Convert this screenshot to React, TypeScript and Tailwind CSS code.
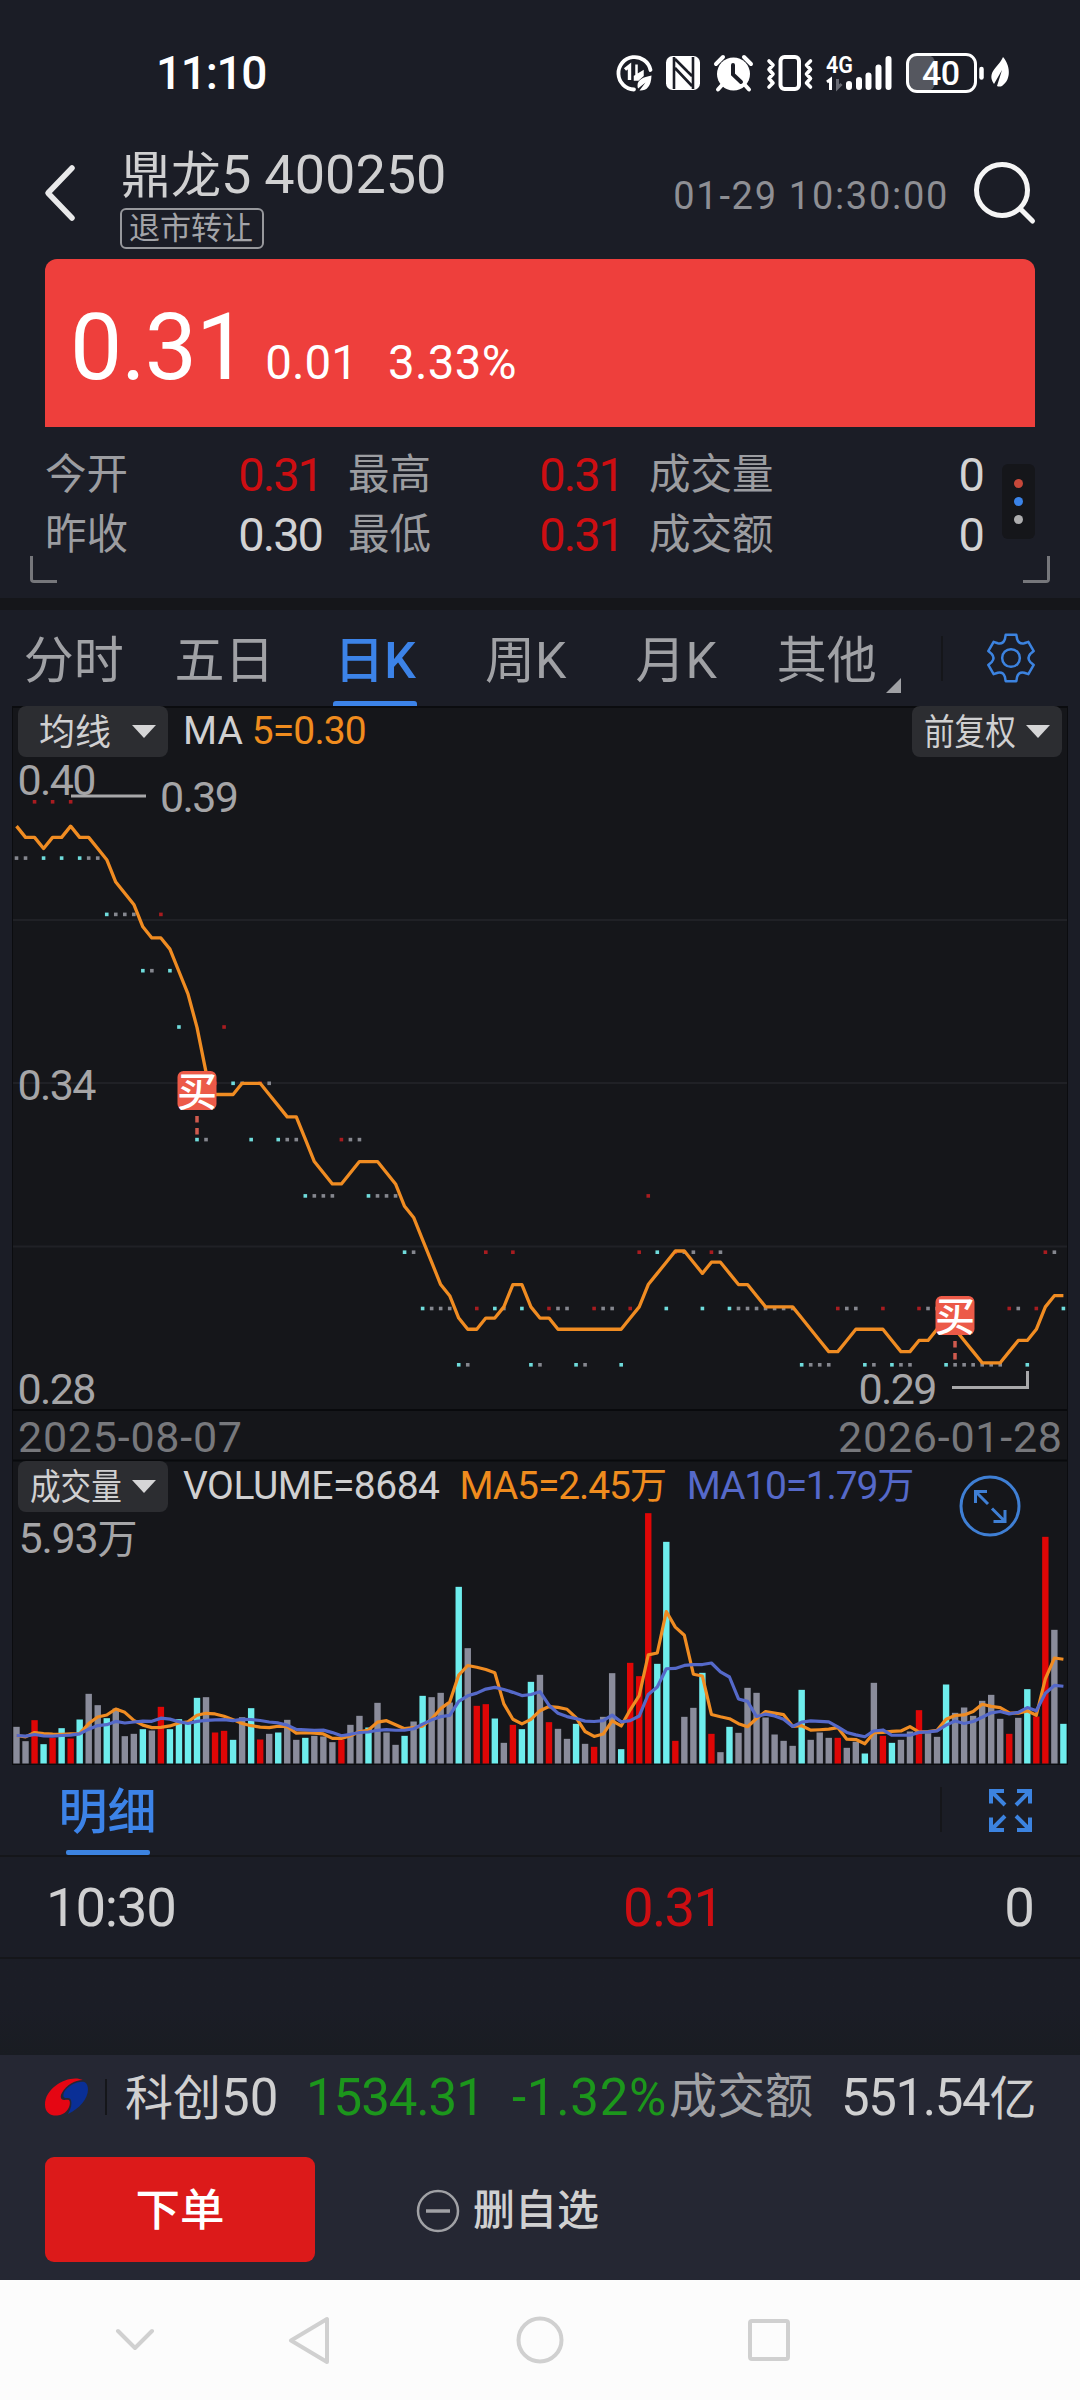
import { Fragment } from 'react'

type Tone = 'r' | 'c' | 'g'

const TONES: Record<Tone, string> = { r: '#df0606', c: '#6eeded', g: '#8a8c9b' }
const DOT_TONES: Record<Tone, string> = { r: '#a81c20', c: '#6fdcdc', g: '#85878f' }

// close price (in cents) per trading day
const CLOSES = [
  38, 38, 39, 38, 39, 38, 39, 38, 38, 38, 37, 37, 37, 37, 36, 36, 37, 36, 35, 34, 33, 33, 34, 35, 34, 34, 33, 34, 34, 33,
  33, 33, 32, 32, 32, 32, 33, 33, 33, 32, 32, 32, 32, 31, 31, 30, 30, 30, 30, 29, 29, 30, 31, 30, 30, 31, 30, 29, 29, 30,
  30, 30, 29, 29, 30, 30, 30, 29, 30, 31, 32, 31, 30, 31, 31, 31, 30, 31, 31, 30, 30, 30, 30, 30, 30, 30, 30, 29, 29, 29,
  29, 30, 30, 30, 29, 29, 30, 29, 29, 29, 30, 30, 30, 29, 29, 29, 29, 29, 29, 29, 30, 30, 29, 30, 31, 31, 30,
]
const PRIOR_CLOSES = [39, 39, 39, 38]

// bar heights, three units per pixel
const VOLUMES = [
  110, 67, 130, 58, 77, 106, 75, 132, 209, 175, 136, 165, 82, 89, 103, 99, 170, 103, 133, 121, 197, 199, 93, 98, 71, 139,
  166, 72, 89, 93, 131, 71, 77, 83, 81, 64, 71, 116, 143, 108, 182, 93, 56, 83, 126, 203, 199, 212, 183, 530, 346, 173,
  178, 135, 62, 116, 103, 245, 266, 124, 104, 74, 119, 59, 50, 140, 271, 43, 302, 262, 751, 299, 665, 68, 140, 167, 272,
  89, 34, 110, 92, 227, 212, 138, 87, 68, 53, 221, 71, 93, 77, 77, 47, 65, 30, 242, 83, 62, 71, 96, 160, 91, 80, 237, 152,
  168, 143, 188, 206, 134, 89, 137, 223, 141, 680, 401, 119,
]

const SLOT = 9.025
const slotX = (i: number) => 16.5 + i * SLOT

const tones: Tone[] = CLOSES.map((c, i) => {
  const prev = i === 0 ? 38 : CLOSES[i - 1]
  return c > prev ? 'r' : c < prev ? 'c' : 'g'
})

const average = (list: number[]) => list.reduce((a, b) => a + b, 0) / list.length

const priceY = (v: number) => 326.3 + (34 - v) * 55.9
const allCloses = [...PRIOR_CLOSES, ...CLOSES]
const priceLine = CLOSES.map((_, i) => `${slotX(i)},${priceY(average(allCloses.slice(i, i + 5)))}`).join(' ')

const VOL_BASE = 251.5
const volumeLine = (n: number, head: number[]) =>
  VOLUMES.map((_, i) => {
    const v = i < head.length ? head[i] : average(VOLUMES.slice(i - n + 1, i + 1))
    return `${slotX(i)},${VOL_BASE - v / 3}`
  }).join(' ')
const ma5 = volumeLine(5, [84, 80, 93, 90])
const ma10 = volumeLine(10, [84, 82, 87, 83, 82, 84, 85, 89, 103])

const polar = (r: number, deg: number) => {
  const a = (deg * Math.PI) / 180
  return `${(24 + r * Math.sin(a)).toFixed(2)} ${(24 - r * Math.cos(a)).toFixed(2)}`
}
const GEAR =
  [0, 60, 120, 180, 240, 300]
    .map((t, i) => `${i ? 'L' : 'M'}${polar(22.8, t - 13)} L${polar(22.8, t + 13)} L${polar(19, t + 18)} Q${polar(15, t + 30)} ${polar(19, t + 42)}`)
    .join(' ') + ' Z'

const TABS = ['分时', '五日', '日K', '周K', '月K', '其他']

const QUOTES = [
  [['今开', '0.31', true], ['最高', '0.31', true], ['成交量', '0', false]],
  [['昨收', '0.30', false], ['最低', '0.31', true], ['成交额', '0', false]],
] as const

const QUOTE_WIDTHS = ['w-[303px]', 'w-[301px]', 'w-[336px]']
const QUOTE_PADS = ['pr-[26px]', 'pr-[26px]', 'pr-[2px]']

function StatusBar() {
  return (
    <div className="flex h-[146px] items-center pl-[156px] text-white">
      <span className="w-[459px] text-[46px] leading-none font-medium tracking-[-1.3px]">11:10</span>
      <svg width="400" height="44" viewBox="0 0 400 44" fill="none" className="shrink-0">
        {/* data saver */}
        <path d="M35.500 19A16.200 16.200 0 1 0 19 38.500" stroke="white" strokeWidth="3.800" strokeLinecap="round" />
        <path d="M10 18.500l4.500-3.500v14" stroke="white" strokeWidth="3.400" />
        <path d="M21.500 13.500v12M20 25.500l7.500-4.500v3.500l-4.500 4h-3z" stroke="white" strokeWidth="2.500" fill="white" />
        <path d="M36.500 24.500C28 26 22.500 29 22.500 34.500c0 1.200.2 2.200.6 3L30.500 31.500 24.500 39.500c6.800.5 11.600-3.500 12-15z" fill="white" />
        {/* nfc */}
        <rect x="51" y="5" width="34" height="34" rx="6.500" fill="white" />
        <path d="M59 6v32M78 6v32M60 8l17 17M60 17l17 18" stroke="#1b1d26" strokeWidth="2.600" />
        <path d="M62 24v14l8 1zM74 20V5l-9 .2z" fill="white" />
        {/* alarm */}
        <circle cx="118.500" cy="23" r="16.500" fill="white" />
        <path d="M101 13l7-7M136 13l-7-7M107 34l-4 4.500M130 34l4 4.500" stroke="white" strokeWidth="4" strokeLinecap="round" />
        <path d="M118 14v9.500l8 7.500" stroke="#1b1d26" strokeWidth="4" strokeLinecap="round" />
        {/* vibrate */}
        <rect x="165.500" y="6" width="18.500" height="32" rx="4" stroke="white" strokeWidth="4" />
        <path d="M154 10l4 4-4 4.500 4 4.500-4 4.500 4 4.500-4 4M195.500 10l-4 4 4 4.500-4 4.500 4 4.500-4 4.500 4 4" stroke="white" strokeWidth="3.600" strokeLinejoin="round" strokeLinecap="round" />
        {/* signal */}
        <text x="211" y="22" fontSize="23" fontWeight="600" fill="white" textLength="27" lengthAdjust="spacingAndGlyphs">4G</text>
        <path d="M212 31l3.500-2.500V39" stroke="white" strokeWidth="3" />
        <path d="M222.500 28v9l4-4" stroke="#686a72" strokeWidth="3" />
        <path d="M234 33v3M244 29v7M253.500 24.500V36M263.500 16.500V36M273.500 8v28" stroke="white" strokeWidth="6" strokeLinecap="round" />
        {/* battery */}
        <rect x="293" y="4" width="27" height="36" rx="8" fill="#55575f" />
        <rect x="292.500" y="3.500" width="68" height="37" rx="9.500" stroke="white" strokeWidth="3" />
        <text x="307" y="33.500" fontSize="34" fontWeight="500" fill="white" textLength="38">40</text>
        <path d="M366.500 18v8.500" stroke="white" strokeWidth="4.500" strokeLinecap="round" />
        <path d="M388 6c7 8 9 22-1 29-2 1-4 .5-5 0l5-16-8 14c-8-12 5-17 9-27z" fill="white" />
      </svg>
    </div>
  )
}

function Header() {
  return (
    <div className="flex h-[113px] items-center pr-[43px] pl-[43px]">
      <svg width="34" height="60" viewBox="0 0 34 60" fill="none" className="-mt-[19px]">
        <path d="M29 5L5 30l24 25" stroke="#e9e9ea" strokeWidth="5.500" strokeLinecap="round" strokeLinejoin="round" />
      </svg>
      <div className="ml-[44px] flex h-full flex-col items-start">
        <div className="flex items-baseline text-[#d0d0d1]">
          <span className="text-[50px] leading-[58px]">鼎龙</span>
          <span className="text-[54px] leading-[58px]">5</span>
          <span className="ml-[13px] text-[54px] leading-[58px]">400250</span>
        </div>
        <div className="mt-[3px] -ml-[1px] flex h-[41px] items-center rounded-[6px] border-2 border-[#97989c] pr-[9px] pl-[7px] text-[31px] leading-none text-[#a3a4a8]">
          退市转让
        </div>
      </div>
      <span className="ml-auto -mt-[14px] text-[38px] leading-none tracking-[1.7px] text-[#8e8f94]">01-29 10:30:00</span>
      <svg width="66" height="66" viewBox="0 0 66 66" fill="none" className="-mt-[19px] ml-[22px]">
        <circle cx="31" cy="30" r="25.500" stroke="#f5f5f5" strokeWidth="5" />
        <path d="M49.500 49l12 12" stroke="#f5f5f5" strokeWidth="5" strokeLinecap="round" />
      </svg>
    </div>
  )
}

function Quote() {
  return (
    <div className="relative h-[339px] px-[45px]">
      <div className="flex h-[168px] items-baseline rounded-t-[12px] bg-[#ee3f3c] pl-[25px] text-white">
        <span className="text-[93px] leading-[177px] tracking-[-1px]">0.31</span>
        <span className="ml-[18px] text-[47.500px] leading-none">0.01</span>
        <span className="ml-[30px] text-[47.500px] leading-none tracking-[0.3px]">3.33%</span>
      </div>
      <div className="flex pt-[17px]">
        <div className="flex flex-col">
          {QUOTES.map((row, r) => (
            <div key={r} className="flex h-[60px] items-center">
              {row.map(([label, value, up], c) => (
                <div key={label} className={`flex items-center justify-between ${QUOTE_WIDTHS[c]} ${QUOTE_PADS[c]}`}>
                  <span className="pt-[2px] text-[41.500px] leading-none text-[#9c9da1]">{label}</span>
                  <span className={`text-[47px] leading-none tracking-[-2px] ${up ? 'text-[#cd0e12]' : 'text-[#d2d2d3]'}`}>{value}</span>
                </div>
              ))}
            </div>
          ))}
        </div>
        <div className="mt-[20px] ml-auto flex h-[75px] w-[33px] flex-col items-center justify-center gap-[9px] rounded-[6px] bg-[#15161a]">
          <i className="size-[9px] rounded-full bg-[#c6483a]" />
          <i className="size-[9px] rounded-full bg-[#3a83e8]" />
          <i className="size-[9px] rounded-full bg-[#adadae]" />
        </div>
      </div>
      <i className="absolute top-[297px] left-[30px] h-[27px] w-[27px] rounded-bl-[4px] border-b-[3px] border-l-[3px] border-[#76777b]" />
      <i className="absolute top-[297px] right-[30px] h-[27px] w-[27px] rounded-br-[4px] border-r-[3px] border-b-[3px] border-[#76777b]" />
    </div>
  )
}

function Tabs() {
  return (
    <div className="flex h-[96px]">
      {TABS.map(t => (
        <div key={t} className={`relative flex w-[150.600px] justify-center pt-[25px] pr-[3px] text-[50px] leading-[52px] ${t === '日K' ? 'font-medium text-[#3c83e8]' : 'text-[#a0a1a5]'}`}>
          {t}
          {t === '日K' && <i className="absolute bottom-0 left-[32px] h-[5px] w-[84px] rounded-t-[3px] bg-[#3c83e8]" />}
          {t === '其他' && (
            <svg width="15" height="15" viewBox="0 0 15 15" className="absolute right-[3px] bottom-[13px]">
              <path d="M15 0v15H0z" fill="#a0a1a5" />
            </svg>
          )}
        </div>
      ))}
      <i className="mt-[26px] ml-[37px] h-[45px] w-[2px] bg-[#15161a]" />
      <svg width="50" height="50" viewBox="0 0 48 48" fill="none" className="mt-[23px] ml-[43px]">
        <path d={GEAR} stroke="#3c83e0" strokeWidth="2.400" strokeLinejoin="round" />
        <circle cx="24" cy="24" r="8.500" stroke="#3c83e0" strokeWidth="2.400" />
      </svg>
    </div>
  )
}

function Picker({ label, narrow }: { label: string; narrow?: boolean }) {
  return (
    <div className={`flex h-[51px] w-[150px] shrink-0 items-center justify-between rounded-[8px] bg-[#2c2d31] pr-[12px] ${narrow ? 'pl-[12px]' : 'pl-[21px]'}`}>
      <span className={`pt-[2px] text-[36px] leading-none text-[#d0d0d1] ${narrow ? '-mr-[17px] origin-left scale-x-[0.85]' : ''}`}>{label}</span>
      <svg width="24" height="13" viewBox="0 0 24 13">
        <path d="M0 0h24L12 13z" fill="#d5d5d6" />
      </svg>
    </div>
  )
}

function PriceChart() {
  return (
    <svg width="1054" height="704" viewBox="13 757 1054 704" fill="none" className="block overflow-visible">
      <g transform="translate(0 757)">
        <path d="M13 163h1054M13 326h1054M13 489.500h1054" stroke="#202126" strokeWidth="2" />
        <path d="M13 653h1054M13 703.500h1054" stroke="#090a0d" strokeWidth="2" />
        {CLOSES.map((c, i) => (
          <rect key={i} x={slotX(i) - 1.8} y={326.3 + (34 - c) * 56.3 - 1.8} width="3.600" height="3.600" fill={DOT_TONES[tones[i]]} />
        ))}
        <g fontSize="43" fill="#a5a5a7">
          <text x="17.500" y="38" textLength="79">0.40</text>
          <text x="160" y="55" textLength="79">0.39</text>
          <text x="17.500" y="343" textLength="79">0.34</text>
          <text x="17.500" y="647" textLength="79">0.28</text>
          <text x="858.500" y="647" textLength="79">0.29</text>
        </g>
        <path d="M71 39h75M952 630.500h75.500V614" stroke="#a8a8aa" strokeWidth="3" />
        <polyline points={priceLine} stroke="#f08c22" strokeWidth="3.300" strokeLinejoin="round" />
        <path d="M197 359v6.500M197 371v6.500M955 584v6.500M955 596v6.500" stroke="#cf5a4e" strokeWidth="3.500" />
        {[[177.5, 314], [935.5, 539]].map(([x, y]) => (
          <Fragment key={x}>
            <rect x={x} y={y} width="39" height="39" rx="6" fill="#ec5a48" />
            <text x={x - 0.5} y={y + 34.5} fontSize="40" fontWeight="500" fill="white">买</text>
          </Fragment>
        ))}
        <g fontSize="43" fill="#77787c">
          <text x="18" y="695" textLength="224">2025-08-07</text>
          <text x="838" y="695" textLength="224">2026-01-28</text>
        </g>
      </g>
    </svg>
  )
}

function VolumeChart() {
  return (
    <svg width="1054" height="252" viewBox="13 0 1054 252" fill="none" className="block">
      {VOLUMES.map((v, i) => (
        <rect key={i} x={slotX(i) - 3.2} y={VOL_BASE - v / 3} width="6.400" height={v / 3} fill={TONES[tones[i]]} />
      ))}
      <text x="18.500" y="41" fontSize="43" fill="#a5a5a7" letterSpacing="-1.200">
        5.93<tspan fontSize="40">万</tspan>
      </text>
      <polyline points={ma5} stroke="#f08c22" strokeWidth="3.200" strokeLinejoin="round" />
      <polyline points={ma10} stroke="#5569c9" strokeWidth="3.200" strokeLinejoin="round" />
    </svg>
  )
}

function Chart() {
  return (
    <div className="mx-[12px] h-[1059px] border border-t-2 border-[#0b0c0f] bg-[#15161a]">
      <div className="-mt-[2px] flex h-[51px] items-center px-[5px]">
        <Picker label="均线" />
        <span className="ml-[15px] text-[39px] leading-none text-[#d0d0d1]">MA</span>
        <span className="ml-[9px] text-[39px] leading-none tracking-[-0.9px] text-[#f08c1e]">5=0.30</span>
        <div className="ml-auto">
          <Picker label="前复权" narrow />
        </div>
      </div>
      <PriceChart />
      <div className="relative flex h-[51px] items-center px-[5px]">
        <Picker label="成交量" narrow />
        <span className="ml-[15px] text-[39px] leading-none tracking-[-0.5px] text-[#d0d0d1]">VOLUME=8684</span>
        <span className="ml-[20px] text-[39px] leading-none tracking-[-1.1px] text-[#f08c1e]">MA5=2.45<span className="text-[37px]">万</span></span>
        <span className="ml-[21px] text-[39px] leading-none tracking-[-1.2px] text-[#5569c9]">MA10=1.79<span className="text-[37px]">万</span></span>
        <svg width="62" height="62" viewBox="0 0 62 62" fill="none" stroke="#3f7fd4" strokeWidth="3" className="absolute top-[14px] left-[946px]">
          <circle cx="31" cy="31" r="29" />
          <path d="M16.500 28V16.500H28M17 17l12 12M46 35v11.500H34.500M45.500 46L33 33.500" />
        </svg>
      </div>
      <VolumeChart />
    </div>
  )
}

function Details() {
  return (
    <div className="flex h-[290px] flex-col">
      <div className="flex h-[92px] border-b-2 border-[#15161a]">
        <div className="relative ml-[58px] flex w-[100px] justify-center pt-[22px] pr-[1px] text-[49px] leading-[52px] font-medium text-[#3c83e8]">
          明细
          <i className="absolute bottom-0 left-[8px] h-[5px] w-[84px] rounded-[2px] bg-[#3c83e0]" />
        </div>
        <i className="mt-[22px] ml-auto h-[45px] w-[2px] bg-[#15161a]" />
        <svg width="43" height="43" viewBox="0 0 43 43" fill="none" stroke="#3c83e0" strokeWidth="4" className="mt-[24px] mr-[48px] ml-[47px]">
          <path d="M2 14.500V2h13M3 3l13 13M41 14.500V2H28M40 3L27 16M2 28.500V41h13M3 40l13-13M41 28.500V41H28M40 40L27 27" />
        </svg>
      </div>
      <div className="flex h-[102px] items-center border-b-2 border-[#15161a] px-[45px] pt-[1px] text-[54.500px] leading-none text-[#d0d0d1]">
        <span className="w-[578px] pl-[1px] tracking-[-1.2px]">10:30</span>
        <span className="tracking-[-1.700px] text-[#cd0e12]">0.31</span>
        <span className="ml-auto">0</span>
      </div>
      <div className="flex-1 bg-gradient-to-b from-[#1b1d26] via-[#1b1d26] to-[#191c22]" />
    </div>
  )
}

function BottomBar() {
  return (
    <div className="h-[225px] bg-[#252733]">
      <div className="flex h-[84px] items-center pr-[45px] pl-[45px] text-[51px] leading-none text-[#d0d0d1]">
        <svg width="43" height="43" viewBox="0 0 42 42" className="shrink-0">
          <path d="M37 4C25-2 0 10 0 28c0 8 6 11 12 10.500 8-.8 12-7 12.300-12C24.500 22 21 23.500 19 23.500c-4 0-4.500-4-2.500-7C21 9 29 4 37 4z" fill="#e50613" />
          <path d="M39 6C33 4 22 9 18.500 16c-1.500 4 0 6 3 5.500 3-.3 4.300 1.500 4.300 5 0 4-1.800 7.500-3.300 10.500C34 32 42 22 42 13c0-3-1-5.500-3-7z" fill="#0a2f96" />
        </svg>
        <i className="ml-[17px] h-[36px] w-[2px] shrink-0 bg-[#15161a]" />
        <span className="ml-[18px] w-[181px] shrink-0 whitespace-nowrap"><span className="text-[48px]">科创</span>50</span>
        <span className="w-[206px] shrink-0 tracking-[-1.1px] text-[#1c961c]">1534.31</span>
        <span className="w-[157px] shrink-0 tracking-[0.7px] text-[#1c961c]">-1.32%</span>
        <span className="shrink-0 text-[48px] text-[#a0a1a5]">成交额</span>
        <span className="ml-auto tracking-[-1.4px] whitespace-nowrap">551.54<span className="text-[47px]">亿</span></span>
      </div>
      <div className="flex items-center pt-[18px] pl-[45px]">
        <div className="flex h-[105px] w-[270px] items-center justify-center rounded-[9px] bg-[#dc1a1a] pt-[3px] text-[44.500px] leading-none font-medium text-white">下单</div>
        <svg width="44" height="44" viewBox="0 0 44 44" fill="none" stroke="#a0a1a5" strokeWidth="2.500" className="mt-[2px] ml-[101px]">
          <circle cx="22" cy="22" r="20" />
          <path d="M10 22h24" strokeWidth="3.500" />
        </svg>
        <span className="ml-[13px] pt-[3px] text-[42px] leading-none font-medium text-[#d0d0d1]">删自选</span>
      </div>
    </div>
  )
}

function NavBar() {
  return (
    <div className="flex h-[120px] items-center bg-[#fcfcfc]">
      <svg width="1080" height="50" viewBox="0 0 1080 50" fill="none" stroke="#d0d0d0" strokeWidth="4" strokeLinejoin="round" strokeLinecap="round">
        <path d="M118 16l17 17 17-17M327 4v43L291 25.500z" />
        <circle cx="540" cy="25" r="21.500" />
        <rect x="750" y="6" width="38" height="38" rx="2" />
      </svg>
    </div>
  )
}

export default function App() {
  return (
    <div className="h-[2400px] w-[1080px] overflow-hidden bg-[#1b1d26] font-['Roboto','Noto_Sans_CJK_SC',sans-serif]">
      <StatusBar />
      <Header />
      <Quote />
      <div className="h-[12px] bg-[#15161a]" />
      <Tabs />
      <Chart />
      <Details />
      <BottomBar />
      <NavBar />
    </div>
  )
}
